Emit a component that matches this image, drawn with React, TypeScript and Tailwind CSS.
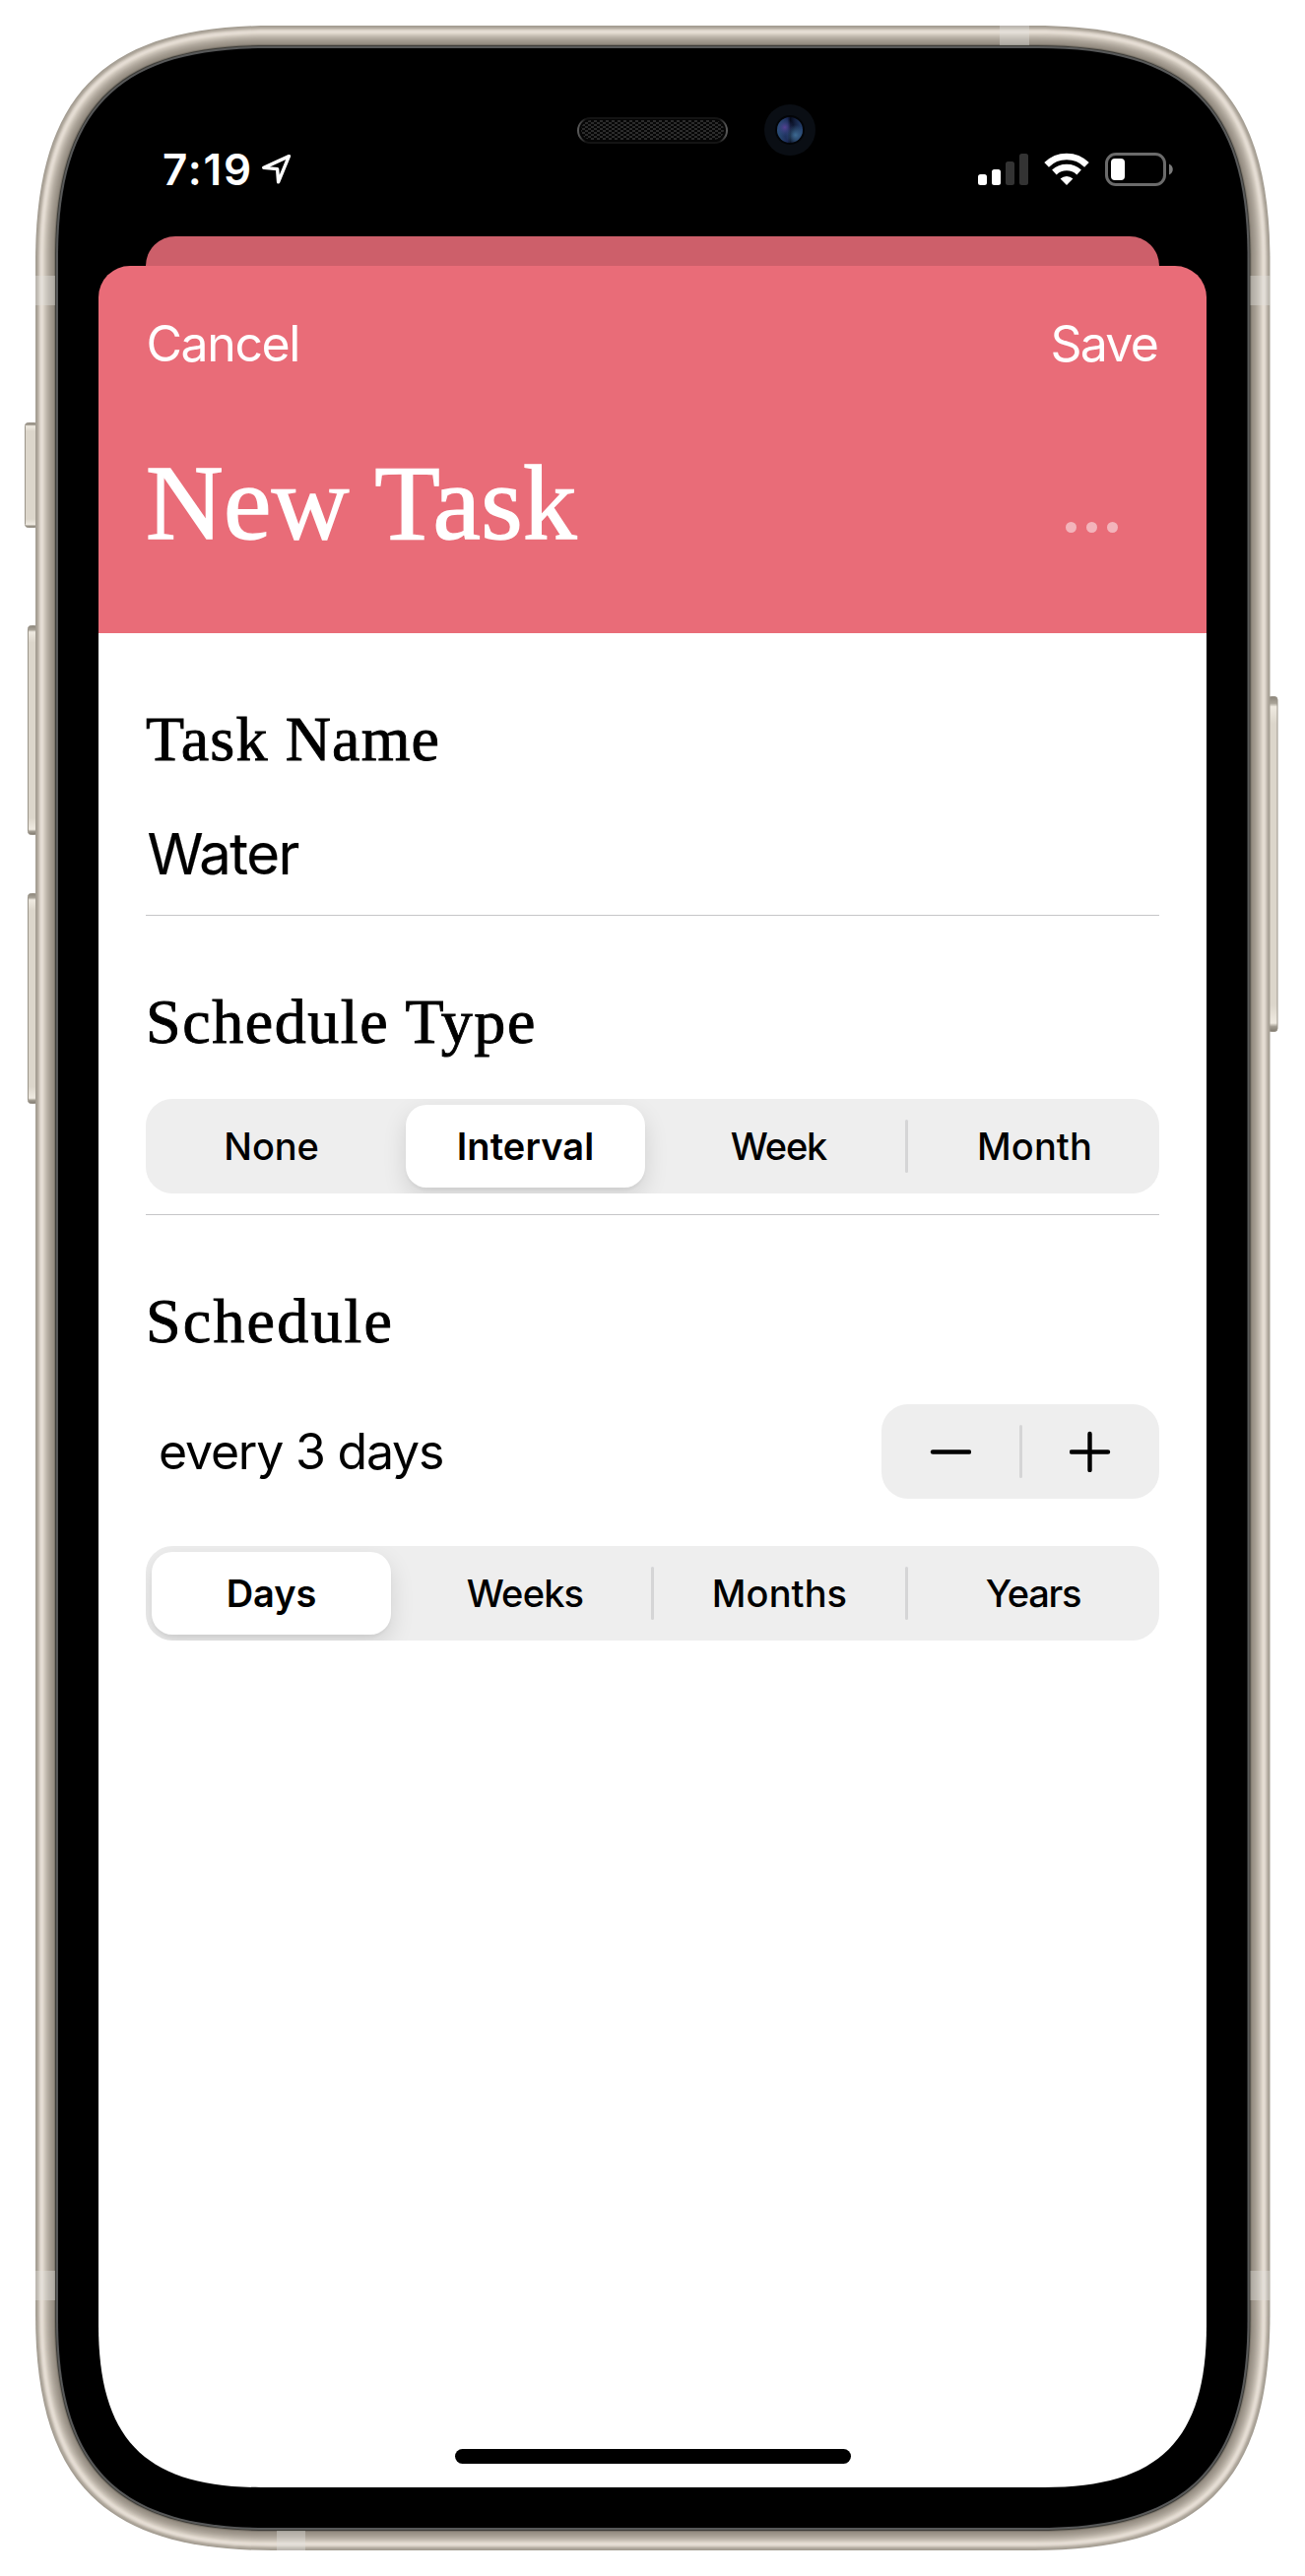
import React from 'react';

/** Rounded rectangle whose corners ease in gradually; `a` is the corner's extent along each edge. */
function smoothRect(x: number, y: number, r: number, b: number, a: number): string {
  const h = a * 0.29;
  return [
    `M${x + a} ${y}`,
    `L${r - a} ${y}`,
    `C${r - h} ${y} ${r} ${y + h} ${r} ${y + a}`,
    `L${r} ${b - a}`,
    `C${r} ${b - h} ${r - h} ${b} ${r - a} ${b}`,
    `L${x + a} ${b}`,
    `C${x + h} ${b} ${x} ${b - h} ${x} ${b - a}`,
    `L${x} ${y + a}`,
    `C${x} ${y + h} ${x + h} ${y} ${x + a} ${y}Z`,
  ].join('');
}

// Shades of the metal rim, one per pixel from the outer edge inwards.
const rim = [
  '#a39c91', '#aaa398', '#b5ada2', '#c6beb3', '#d8d0c6', '#e2dad1', '#e6ded5', '#e2dad0', '#d9d1c6', '#cfc7bc',
  '#c6beb3', '#beb6ab', '#b6aea3', '#afa79c', '#a9a196', '#a39b90', '#9e968b', '#999186', '#948c81', '#7a746a',
  '#3c3b37', '#5b5c5c', '#555657',
];

const bands = [
  [36, 280, 20, 30], [1269.5, 280, 20, 30], [36, 2306, 20, 30], [1269.5, 2306, 20, 30],
  [1015, 26, 30, 20], [281, 2570, 29, 20],
];

const sideButtons = [
  { x: 25, y: 429, w: 14, h: 107 },
  { x: 28, y: 635, w: 11, h: 213 },
  { x: 28, y: 907, w: 11, h: 214 },
  { x: 1287, y: 707, w: 10.5, h: 341 },
];

function DeviceFrame() {
  return (
    <svg className="absolute inset-0" width="1325" height="2616" viewBox="0 0 1325 2616" aria-hidden="true">
      <defs>
        <linearGradient id="key" x1="0" x2="0" y1="0" y2="1">
          <stop offset="0" stopColor="#8c867b" />
          <stop offset="0.02" stopColor="#aaa499" />
          <stop offset="0.03" stopColor="#efeae1" />
          <stop offset="0.08" stopColor="#dcd6cb" />
          <stop offset="0.92" stopColor="#dcd6cb" />
          <stop offset="0.975" stopColor="#efeae1" />
          <stop offset="0.985" stopColor="#a39d92" />
          <stop offset="1" stopColor="#7f796e" />
        </linearGradient>
        <pattern id="mesh" width="6" height="4" patternUnits="userSpaceOnUse">
          <rect width="6" height="4" fill="#060606" />
          <rect width="3" height="2" fill="#2b2b2b" />
          <rect x="3" y="2" width="3" height="2" fill="#2b2b2b" />
        </pattern>
        <linearGradient id="grille" x1="0" x2="1" y1="0" y2="0">
          <stop offset="0" stopColor="#5a5a5a" />
          <stop offset="0.05" stopColor="#141414" />
          <stop offset="0.95" stopColor="#141414" />
          <stop offset="1" stopColor="#5a5a5a" />
        </linearGradient>
        <radialGradient id="lensBlue" cx="0.72" cy="0.7" r="0.4">
          <stop offset="0" stopColor="#3d6a92" />
          <stop offset="1" stopColor="#3d6a92" stopOpacity="0" />
        </radialGradient>
        <radialGradient id="lensViolet" cx="0.3" cy="0.4" r="0.35">
          <stop offset="0" stopColor="#574092" />
          <stop offset="1" stopColor="#2c4a80" stopOpacity="0" />
        </radialGradient>
        <linearGradient id="lens" x1="0" x2="1" y1="0" y2="0">
          <stop offset="0" stopColor="#2a5078" />
          <stop offset="0.4" stopColor="#1c2a58" />
          <stop offset="0.52" stopColor="#060a1a" />
          <stop offset="0.7" stopColor="#14203f" />
          <stop offset="1" stopColor="#24406f" />
        </linearGradient>
      </defs>
      {sideButtons.map((k) => (
        <rect key={k.y} x={k.x + 0.5} y={k.y + 0.5} width={k.w - 1} height={k.h - 1} rx="3" fill="url(#key)" stroke="#9b958a" strokeWidth="1" />
      ))}
      {rim.map((color, i) => (
        <path key={i} d={smoothRect(36 + i, 26 + i, 1289.5 - i, 2590 - i, 240 - i * 1.2)} fill={color} />
      ))}
      {bands.map(([x, y, w, h]) => (
        <rect key={`${x}-${y}`} x={x} y={y} width={w} height={h} fill="#e3e3df" fillOpacity="0.38" />
      ))}
      <path d={smoothRect(59, 49, 1266.5, 2567, 212)} fill="#000" />
      <path d={smoothRect(100, 350, 1225, 2526, 165)} fill="#fff" />
      <rect x="587" y="120" width="151" height="25" rx="12.5" fill="#050505" stroke="url(#grille)" strokeWidth="2" />
      <rect x="590" y="122" width="145" height="20" rx="10" fill="url(#mesh)" />
      <circle cx="802" cy="132" r="26" fill="#0a0e14" />
      <circle cx="802" cy="132" r="15" fill="#030508" />
      <circle cx="802" cy="132" r="13" fill="url(#lens)" />
      <circle cx="802" cy="132" r="13" fill="url(#lensBlue)" />
      <circle cx="802" cy="132" r="13" fill="url(#lensViolet)" />
    </svg>
  );
}

function StatusBar() {
  return (
    <div className="flex h-[150px] justify-between pl-[65px] pr-[33px] pt-[52px] text-white">
      <div className="flex h-[60px]">
        <span className="w-[101px] text-[44px] font-semibold leading-[60px] tracking-[1.8px]">7:19</span>
        <svg className="mt-[13px]" width="32" height="34" viewBox="0 0 32 34" fill="none" stroke="#fff" strokeWidth="3.4" strokeLinejoin="round">
          <path d="M27.4 3.6 L1.8 15.4 L15.6 16.6 L16.6 29.8 Z" />
        </svg>
      </div>
      <div className="mt-[12px] flex h-[36px]">
        <svg width="52" height="36" viewBox="0 0 52 36">
          <rect x="0" y="23" width="9" height="11" rx="2.5" fill="#fff" />
          <rect x="14" y="18" width="9" height="16" rx="2.5" fill="#fff" />
          <rect x="28" y="10" width="9" height="24" rx="2.5" fill="#333" />
          <rect x="42" y="2" width="9" height="32" rx="2.5" fill="#333" />
        </svg>
        <svg className="ml-[15px]" width="47" height="36" viewBox="0 0 47 36" fill="none" stroke="#fff" strokeWidth="6.6">
          <path d="M2.6 13.4 A29 29 0 0 1 43.4 13.4" />
          <path d="M10.4 21 A18.3 18.3 0 0 1 35.6 21" />
          <path d="M23 34 L16.6 27.6 A9.2 9.2 0 0 1 29.4 27.6 Z" fill="#fff" stroke="none" />
        </svg>
        <svg className="ml-[15px]" width="70" height="36" viewBox="0 0 70 36">
          <rect x="1.5" y="2.5" width="59" height="31" rx="9.5" fill="none" stroke="#6b6b6b" strokeWidth="3" />
          <rect x="6" y="7" width="14" height="22" rx="4" fill="#fff" />
          <path d="M65 12.5 C70 14.5 70 21.5 65 23.5 Z" fill="#7b7b7b" />
        </svg>
      </div>
    </div>
  );
}

function SectionTitle({ children, className }: { children: React.ReactNode; className: string }) {
  return (
    <h2 className={`h-[80px] whitespace-nowrap font-['Liberation_Serif',serif] text-[64px] leading-[80px] [-webkit-text-stroke:0.9px_currentColor] ${className}`}>
      {children}
    </h2>
  );
}

type Segment = { label: string; tracking: string };

function Segmented({ items, selected }: { items: Segment[]; selected: number }) {
  return (
    <div className="flex h-[96px] overflow-hidden rounded-[27px] bg-[#eeeeee] p-[6px]">
      {items.map((item, i) => (
        <React.Fragment key={item.label}>
          {i > 0 && (
            <div className="flex w-[15px] shrink-0 items-center justify-center">
              {i !== selected && i - 1 !== selected && <div className="h-[54px] w-[3px] rounded-full bg-[#d5d5d6]" />}
            </div>
          )}
          <div
            className={
              i === selected
                ? 'flex-1 rounded-[21px] bg-white text-center text-[38px] font-semibold leading-[84px] shadow-[0_9px_24px_rgba(0,0,0,0.12),0_3px_3px_rgba(0,0,0,0.04)]'
                : 'flex-1 text-center text-[38px] font-medium leading-[84px]'
            }
          >
            <span className={item.tracking}>{item.label}</span>
          </div>
        </React.Fragment>
      ))}
    </div>
  );
}

function Stepper() {
  return (
    <div className="flex h-[96px] w-[282px] items-center rounded-[27px] bg-[#eeeeee]">
      <div className="flex flex-1 justify-center">
        <svg width="42" height="42" viewBox="0 0 42 42" stroke="#000" strokeWidth="4.4" strokeLinecap="round">
          <path d="M3 21.5H40" />
        </svg>
      </div>
      <div className="h-[54px] w-[3px] rounded-full bg-[#d5d5d6]" />
      <div className="flex flex-1 justify-center">
        <svg width="42" height="42" viewBox="0 0 42 42" stroke="#000" strokeWidth="4.4" strokeLinecap="round">
          <path d="M2 21.5H39M20.5 3V40" />
        </svg>
      </div>
    </div>
  );
}

const types: Segment[] = [
  { label: 'None', tracking: 'tracking-[-0.1px]' },
  { label: 'Interval', tracking: 'tracking-[0.1px]' },
  { label: 'Week', tracking: 'mr-[2px] tracking-[-1.2px]' },
  { label: 'Month', tracking: 'ml-[2px] tracking-[0.1px]' },
];

const units: Segment[] = [
  { label: 'Days', tracking: 'tracking-[-0.1px]' },
  { label: 'Weeks', tracking: 'mr-px tracking-[-0.8px]' },
  { label: 'Months', tracking: 'tracking-[0.1px]' },
  { label: 'Years', tracking: 'mr-px tracking-[-1.2px]' },
];

export default function App() {
  return (
    <div className="relative h-[2616px] w-[1325px] overflow-hidden bg-white font-['Inter',sans-serif] text-black">
      <DeviceFrame />
      <div className="relative ml-[100px] flex h-[2526px] w-[1125px] flex-col pt-[90px]">
        <StatusBar />
        <div className="mx-[48px] h-[30px] rounded-t-[30px] bg-[#cd5f6a]" />

        <header className="h-[373px] rounded-t-[32px] bg-[#e96c78] px-[48px] pt-[49px] text-white">
          <div className="flex h-[60px] justify-between pl-[0.5px] pr-[2px] text-[50px] leading-[60px]">
            <button className="tracking-[-1.4px]">Cancel</button>
            <button className="tracking-[-1.8px]">Save</button>
          </div>
          <div className="mt-[71px] flex h-[120px] justify-between">
            <h1 className="whitespace-nowrap font-['Liberation_Serif',serif] text-[109px] leading-[122px] tracking-[0.3px] [-webkit-text-stroke:1.4px_currentColor]">
              New Task
            </h1>
            <div className="mr-[42px] mt-[80px] flex h-[11px] gap-[10px]">
              <div className="size-[11px] rounded-full bg-[#f3b4bb]" />
              <div className="size-[11px] rounded-full bg-[#f3b4bb]" />
              <div className="size-[11px] rounded-full bg-[#f3b4bb]" />
            </div>
          </div>
        </header>

        <main className="flex flex-col px-[48px]">
          <SectionTitle className="mb-[36px] mt-[68px] tracking-[1.16px]">Task Name</SectionTitle>
          <div className="h-[80px] pl-[1.5px] text-[58px] leading-[80px] tracking-[-1.5px] [-webkit-text-stroke:0.2px_currentColor]">Water</div>
          <div className="mt-[22px] h-px bg-[#c6c6c8]" />

          <SectionTitle className="mb-[38px] mt-[68px] tracking-[1.57px]">Schedule Type</SectionTitle>
          <Segmented items={types} selected={1} />
          <div className="mt-[21px] h-px bg-[#c6c6c8]" />

          <SectionTitle className="mb-[44px] mt-[68px] tracking-[2.2px]">Schedule</SectionTitle>
          <div className="mb-[48px] flex h-[96px] items-center justify-between">
            <div className="pl-[13px] text-[50px] leading-[96px] tracking-[-1.2px]">every 3 days</div>
            <Stepper />
          </div>
          <Segmented items={units} selected={0} />
        </main>

        <div className="mx-auto mb-[24px] mt-auto h-[15px] w-[402px] rounded-full bg-black" />
      </div>
    </div>
  );
}
